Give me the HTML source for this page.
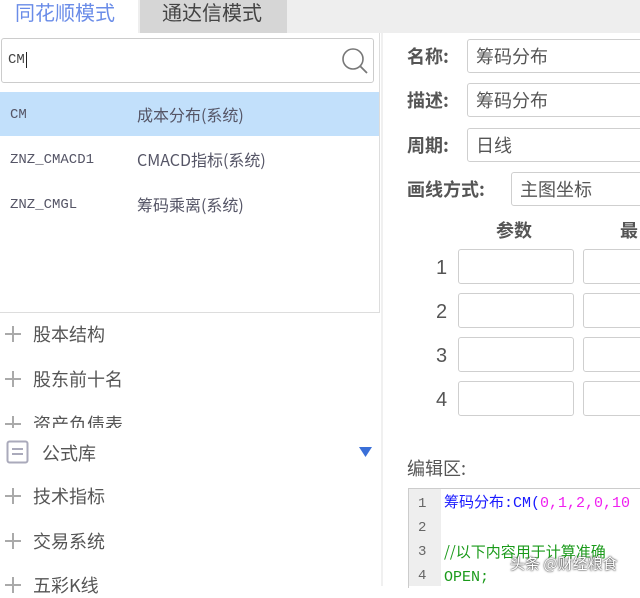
<!DOCTYPE html>
<html><head><meta charset="utf-8"><style>
*{margin:0;padding:0;box-sizing:border-box}
body{width:640px;height:586px;overflow:hidden;background:#fff;position:relative;font-family:"Liberation Sans","Noto Sans CJK SC",sans-serif;color:#555}
.a{position:absolute}
.cj{font-family:"Noto Sans CJK SC",sans-serif}
.mono{font-family:"Liberation Mono","Noto Sans CJK SC",monospace}
.inp{position:absolute;border:1px solid #cfcfcf;border-radius:3px;background:#fff}
.lbl{position:absolute;font-weight:bold;font-size:18px;color:#555;font-family:"Noto Sans CJK SC",sans-serif;line-height:20px}
.tv{position:absolute;font-size:18px;color:#555;font-family:"Noto Sans CJK SC",sans-serif;line-height:20px}
.num{position:absolute;font-size:20px;color:#555;line-height:20px}
.pl{position:absolute;width:16px;height:16px}
.pl:before{content:"";position:absolute;left:0;top:7px;width:16px;height:2px;background:#aaa}
.pl:after{content:"";position:absolute;left:7px;top:0;width:2px;height:16px;background:#aaa}
</style></head><body>
<div class="a" style="left:0;top:0;width:640px;height:33px;background:#eeeeee"></div>
<div class="a" style="left:0;top:0;width:138px;height:33px;background:#fff"></div>
<div class="a cj" style="left:15px;top:-1px;font-size:20px;line-height:26px;color:#6a8ce8">同花顺模式</div>
<div class="a" style="left:140px;top:0;width:147px;height:33px;background:#d6d6d6"></div>
<div class="a cj" style="left:162px;top:-1px;font-size:20px;line-height:26px;color:#444">通达信模式</div>
<div class="a" style="left:0;top:33px;width:380px;height:280px;border-right:1px solid #ddd;border-bottom:1px solid #ddd;background:#fff"></div>
<div class="a" style="left:381px;top:33px;width:2px;height:553px;background:#f0f0f0"></div>
<div class="inp" style="left:1px;top:38px;width:373px;height:45px;border-color:#ccc"></div>
<div class="a mono" style="left:8px;top:52px;font-size:14px;color:#444">CM<span style="border-left:1px solid #222;margin-left:1px"></span></div>
<svg class="a" style="left:340px;top:46px" width="30" height="30"><circle cx="13" cy="13" r="10" fill="none" stroke="#777" stroke-width="1.6"/><line x1="20.5" y1="20.5" x2="27" y2="27" stroke="#777" stroke-width="1.8"/></svg>
<div class="a" style="left:0;top:92px;width:379px;height:44px;background:#c2e0fb"></div>
<div class="a mono" style="left:10px;top:107px;font-size:14px;color:#556">CM</div>
<div class="a cj" style="left:137px;top:102px;font-size:16px;color:#556">成本分布(系统)</div>
<div class="a mono" style="left:10px;top:152px;font-size:14px;color:#556">ZNZ_CMACD1</div>
<div class="a cj" style="left:137px;top:147px;font-size:16px;color:#556">CMACD指标(系统)</div>
<div class="a mono" style="left:10px;top:197px;font-size:14px;color:#556">ZNZ_CMGL</div>
<div class="a cj" style="left:137px;top:192px;font-size:16px;color:#556">筹码乘离(系统)</div>
<div class="pl" style="left:5px;top:326px"></div><div class="tv" style="left:33px;top:324px">股本结构</div>
<div class="pl" style="left:5px;top:371px"></div><div class="tv" style="left:33px;top:369px">股东前十名</div>
<div class="a" style="left:0;top:412px;width:378px;height:16px;overflow:hidden"><div class="pl" style="left:5px;top:4px"></div><div class="tv" style="left:33px;top:2px">资产负债表</div></div>
<svg class="a" style="left:6px;top:440px" width="24" height="24"><rect x="1.5" y="1.5" width="20" height="21" rx="2" fill="none" stroke="#aab" stroke-width="2"/><line x1="6" y1="9" x2="17" y2="9" stroke="#aab" stroke-width="2"/><line x1="6" y1="14" x2="17" y2="14" stroke="#aab" stroke-width="2"/></svg>
<div class="tv" style="left:42px;top:443px">公式库</div>
<svg class="a" style="left:359px;top:447px" width="13" height="11"><polygon points="0,0 13,0 6.5,10" fill="#3a6fd8"/></svg>
<div class="pl" style="left:5px;top:488px"></div><div class="tv" style="left:33px;top:486px">技术指标</div>
<div class="pl" style="left:5px;top:533px"></div><div class="tv" style="left:33px;top:531px">交易系统</div>
<div class="pl" style="left:5px;top:577px"></div><div class="tv" style="left:33px;top:575px">五彩K线</div>
<div class="lbl" style="left:407px;top:46px">名称:</div>
<div class="inp" style="left:467px;top:39px;width:180px;height:34px"></div>
<div class="tv" style="left:476px;top:46px">筹码分布</div>
<div class="lbl" style="left:407px;top:90px">描述:</div>
<div class="inp" style="left:467px;top:83px;width:180px;height:34px"></div>
<div class="tv" style="left:476px;top:90px">筹码分布</div>
<div class="lbl" style="left:407px;top:135px">周期:</div>
<div class="inp" style="left:467px;top:128px;width:180px;height:34px"></div>
<div class="tv" style="left:476px;top:135px">日线</div>
<div class="lbl" style="left:407px;top:179px">画线方式:</div>
<div class="inp" style="left:511px;top:172px;width:140px;height:34px"></div>
<div class="tv" style="left:520px;top:179px">主图坐标</div>
<div class="tv" style="left:496px;top:220px;font-weight:bold">参数</div>
<div class="tv" style="left:620px;top:220px;font-weight:bold">最</div>
<div class="num" style="left:436px;top:258px">1</div>
<div class="num" style="left:436px;top:302px">2</div>
<div class="num" style="left:436px;top:346px">3</div>
<div class="num" style="left:436px;top:390px">4</div>
<div class="inp" style="left:458px;top:249px;width:116px;height:35px"></div><div class="inp" style="left:583px;top:249px;width:80px;height:35px"></div>
<div class="inp" style="left:458px;top:293px;width:116px;height:35px"></div><div class="inp" style="left:583px;top:293px;width:80px;height:35px"></div>
<div class="inp" style="left:458px;top:337px;width:116px;height:35px"></div><div class="inp" style="left:583px;top:337px;width:80px;height:35px"></div>
<div class="inp" style="left:458px;top:381px;width:116px;height:35px"></div><div class="inp" style="left:583px;top:381px;width:80px;height:35px"></div>
<div class="tv" style="left:407px;top:458px;font-size:18px">编辑区:</div>
<div class="a" style="left:408px;top:488px;width:240px;height:100px;border:1px solid #ccc;border-right:none;border-bottom:none"></div>
<div class="a" style="left:409px;top:489px;width:32px;height:97px;background:#eeeeee"></div>
<div class="a mono" style="left:418px;top:492px;font-size:14px;line-height:24px;color:#666">1<br>2<br>3<br>4</div>
<div class="a mono" style="left:444px;top:490px;font-size:15px;line-height:24px;white-space:nowrap"><span style="color:#1a1aff;font-family:'Noto Sans CJK SC',sans-serif">筹码分布</span><span style="color:#1a1aff">:CM(</span><span style="color:#f020f0">0,1,2,0,10</span><br><br><span style="color:#1a9a1a;font-family:'Noto Sans CJK SC',sans-serif">//以下内容用于计算准确</span><br><span style="color:#1a9a1a">OPEN;</span></div>
<div class="a cj" style="left:510px;top:553px;font-size:15px;color:#fff;text-shadow:0 0 2px #333,0 0 1px #333">头条 @财经粮食</div>
</body></html>
